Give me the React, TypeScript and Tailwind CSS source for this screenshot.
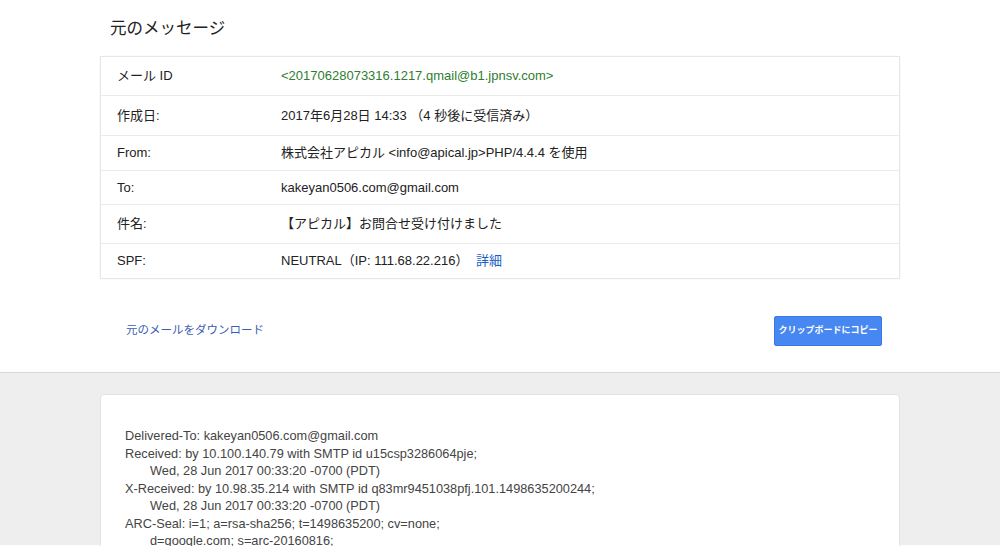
const rows: { label: string; value: React.ReactNode; h: string }[] = [
  {
    label: "メール ID",
    value: <span className="text-[#2f7d32]">&lt;20170628073316.1217.qmail@b1.jpnsv.com&gt;</span>,
    h: "h-[38px]",
  },
  { label: "作成日:", value: "2017年6月28日 14:33 （4 秒後に受信済み）", h: "h-[40px]" },
  { label: "From:", value: "株式会社アピカル <info@apical.jp>PHP/4.4.4 を使用", h: "h-[35px]" },
  { label: "To:", value: "kakeyan0506.com@gmail.com", h: "h-[34px]" },
  { label: "件名:", value: "【アピカル】お問合せ受け付けました", h: "h-[39px]" },
  {
    label: "SPF:",
    value: (
      <>
        NEUTRAL（IP: 111.68.22.216） <span className="ml-1 text-[#1a5fc4]">詳細</span>
      </>
    ),
    h: "h-[35px]",
  },
];

const raw: { text: string; indent?: boolean }[] = [
  { text: "Delivered-To: kakeyan0506.com@gmail.com" },
  { text: "Received: by 10.100.140.79 with SMTP id u15csp3286064pje;" },
  { text: "Wed, 28 Jun 2017 00:33:20 -0700 (PDT)", indent: true },
  { text: "X-Received: by 10.98.35.214 with SMTP id q83mr9451038pfj.101.1498635200244;" },
  { text: "Wed, 28 Jun 2017 00:33:20 -0700 (PDT)", indent: true },
  { text: "ARC-Seal: i=1; a=rsa-sha256; t=1498635200; cv=none;" },
  { text: "d=google.com; s=arc-20160816;", indent: true },
  { text: "b=lb+dkyTz7q+7eXMGOVeNVyf7PUnAASV+tWE9FB2UbE8vCmP/0XeFqmlxNCUNoTQdb", indent: true },
];

export default function App() {
  return (
    <div className="h-[546px] w-[1000px] overflow-hidden bg-white font-['Liberation_Sans','Noto_Sans_CJK_JP',sans-serif] text-[#222]">
      <div className="h-[373px] border-b border-[#d9d9d9]">
        <h1 className="pl-[110px] pt-[17px] text-[16.5px] leading-[22px] text-[#222]">元のメッセージ</h1>

        <div className="mx-[100px] mt-[17px] border border-[#e6e6e6] shadow-[0_0_2px_rgba(0,0,0,0.05)]">
          {rows.map((r, i) => (
            <div
              key={r.label}
              className={`flex items-center text-[13px] ${r.h} ${i > 0 ? "border-t border-[#ebebeb]" : ""}`}
            >
              <div className="w-[180px] pl-[16px]">{r.label}</div>
              <div>{r.value}</div>
            </div>
          ))}
        </div>

        <div className="mx-[100px] mt-[37px] flex items-center justify-between">
          <a className="pl-[26px] text-[11.5px] text-[#3b5db3]">元のメールをダウンロード</a>
          <button className="mr-[18px] h-[30px] w-[108px] rounded-[2px] border border-[#3b78e7] bg-[#4787f1] text-[9px] font-bold text-white">
            クリップボードにコピー
          </button>
        </div>
      </div>

      <div className="h-[172px] bg-[#eeeeee] px-[100px] pt-[21px]">
        <div className="h-[160px] rounded-t-[4px] border border-[#e3e3e3] bg-white pl-[24px] pt-[32px] text-[12.75px] leading-[17.5px] text-[#444]">
          {raw.map((l, i) => (
            <div key={i} className={`whitespace-nowrap ${l.indent ? "pl-[25px]" : ""}`}>
              {l.text}
            </div>
          ))}
        </div>
      </div>
    </div>
  );
}
